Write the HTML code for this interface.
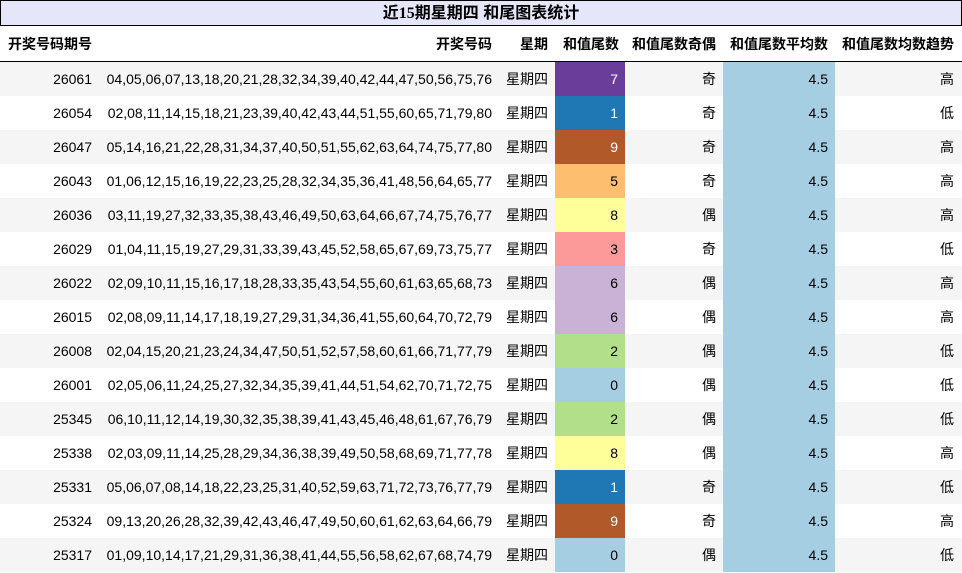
<!DOCTYPE html><html><head><meta charset="utf-8"><style>
body{margin:0;width:962px;height:573px;background:#fff;font-family:"Liberation Sans","Noto Sans CJK SC",sans-serif;font-size:14px;color:#000;overflow:hidden;position:relative}
.t{position:absolute;left:0;top:0;width:960px;height:24px;border:1px solid #000;background:#e6e6fa;text-align:center;font-weight:bold;font-size:16px;line-height:25px}
.t span{font-family:"Liberation Serif","Noto Serif CJK SC",serif}
.h{position:absolute;top:26px;left:0;width:962px;height:35px;border-bottom:1px solid #000;font-weight:bold;line-height:37px}
.r{position:absolute;left:0;width:962px;height:34px;line-height:34px}
.c{position:absolute;top:0;height:100%;text-align:right;white-space:nowrap}
</style></head><body>
<div class="t">近<span>15</span>期星期四 和尾图表统计</div>
<div class="h">
<div class="c" style="left:0;width:92px">开奖号码期号</div>
<div class="c" style="left:100px;width:392px">开奖号码</div>
<div class="c" style="left:498px;width:50px">星期</div>
<div class="c" style="left:555px;width:64px">和值尾数</div>
<div class="c" style="left:625px;width:91px">和值尾数奇偶</div>
<div class="c" style="left:723px;width:105px">和值尾数平均数</div>
<div class="c" style="left:835px;width:119px">和值尾数均数趋势</div>
</div>
<div id="rows"></div>
<script>
var d=[["26061","04,05,06,07,13,18,20,21,28,32,34,39,40,42,44,47,50,56,75,76",7,"奇","高"],
["26054","02,08,11,14,15,18,21,23,39,40,42,43,44,51,55,60,65,71,79,80",1,"奇","低"],
["26047","05,14,16,21,22,28,31,34,37,40,50,51,55,62,63,64,74,75,77,80",9,"奇","高"],
["26043","01,06,12,15,16,19,22,23,25,28,32,34,35,36,41,48,56,64,65,77",5,"奇","高"],
["26036","03,11,19,27,32,33,35,38,43,46,49,50,63,64,66,67,74,75,76,77",8,"偶","高"],
["26029","01,04,11,15,19,27,29,31,33,39,43,45,52,58,65,67,69,73,75,77",3,"奇","低"],
["26022","02,09,10,11,15,16,17,18,28,33,35,43,54,55,60,61,63,65,68,73",6,"偶","高"],
["26015","02,08,09,11,14,17,18,19,27,29,31,34,36,41,55,60,64,70,72,79",6,"偶","高"],
["26008","02,04,15,20,21,23,24,34,47,50,51,52,57,58,60,61,66,71,77,79",2,"偶","低"],
["26001","02,05,06,11,24,25,27,32,34,35,39,41,44,51,54,62,70,71,72,75",0,"偶","低"],
["25345","06,10,11,12,14,19,30,32,35,38,39,41,43,45,46,48,61,67,76,79",2,"偶","低"],
["25338","02,03,09,11,14,25,28,29,34,36,38,39,49,50,58,68,69,71,77,78",8,"偶","高"],
["25331","05,06,07,08,14,18,22,23,25,31,40,52,59,63,71,72,73,76,77,79",1,"奇","低"],
["25324","09,13,20,26,28,32,39,42,43,46,47,49,50,60,61,62,63,64,66,79",9,"奇","高"],
["25317","01,09,10,14,17,21,29,31,36,38,41,44,55,56,58,62,67,68,74,79",0,"偶","低"]];
var col={0:"#a6cee3",1:"#1f78b4",2:"#b2df8a",3:"#fb9a99",5:"#fdbf6f",6:"#cab2d6",7:"#6a3d9a",8:"#ffff99",9:"#b15928"};
var h="";
d.forEach(function(r,i){var bg=i%2==0?"#f5f5f5":"#fff";var w=(r[2]==7||r[2]==1||r[2]==9)?"#fff":"#000";
h+='<div class="r" style="top:'+(62+i*34)+'px;background:'+bg+'">'+
'<div class="c" style="left:0;width:92px">'+r[0]+'</div>'+
'<div class="c" style="left:100px;width:392px">'+r[1]+'</div>'+
'<div class="c" style="left:498px;width:50px">星期四</div>'+
'<div class="c" style="left:555px;width:70px;background:'+col[r[2]]+';color:'+w+'"><span style="padding-right:7px">'+r[2]+'</span></div>'+
'<div class="c" style="left:625px;width:91px">'+r[3]+'</div>'+
'<div class="c" style="left:723px;width:112px;background:#a6cee3"><span style="padding-right:7px">4.5</span></div>'+
'<div class="c" style="left:835px;width:119px">'+r[4]+'</div></div>';});
document.getElementById("rows").innerHTML=h;
</script>
</body></html>
